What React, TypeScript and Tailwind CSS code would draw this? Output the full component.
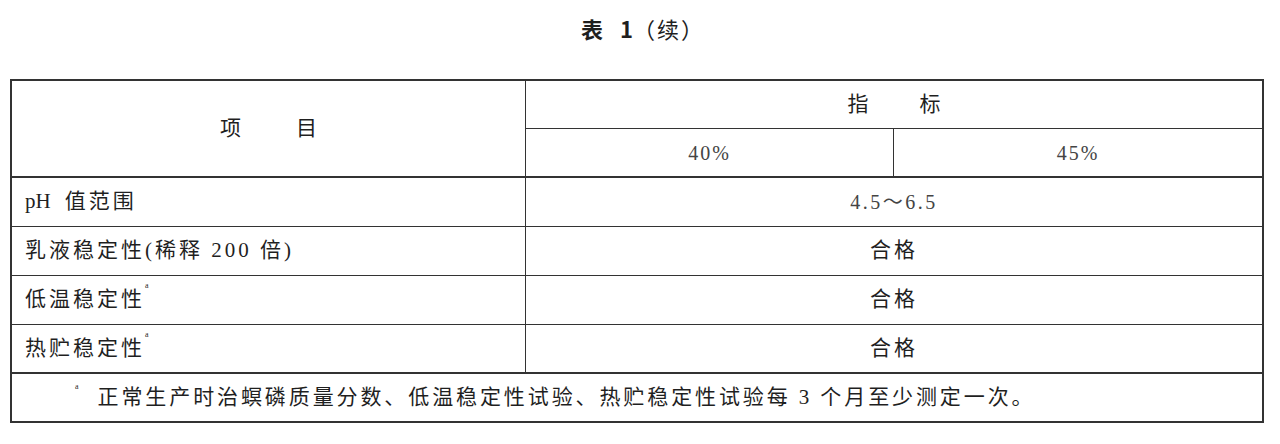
const font = "font-['Liberation_Serif','Noto_Sans_CJK_SC',serif]";

const rows = [
  { label: "pH 值范围", note: false, value: "4.5～6.5" },
  { label: "乳液稳定性(稀释 200 倍)", note: false, value: "合格" },
  { label: "低温稳定性", note: true, value: "合格" },
  { label: "热贮稳定性", note: true, value: "合格" },
];

const App = () => {
  return (
    <div className={`w-[1280px] h-[444px] bg-white text-[#1f1f1f] ${font}`}>
      <div className="h-[79px] pt-[14px] flex justify-center">
        <h1 className="leading-[28px] text-[22px] font-['Noto_Sans_CJK_SC',sans-serif] pl-[6px]">
          <span className="font-bold">表</span>
          <span className="font-bold ml-[17px]">1</span>
          <span className="tracking-[2px]">（续）</span>
        </h1>
      </div>

      <div className="ml-[10px] w-[1254px] h-[344px] border-2 border-[#333] flex flex-col">
        {/* header */}
        <div className="flex h-[97px] border-b-2 border-[#333]">
          <div className="w-[514px] border-r border-[#333] flex items-center justify-center gap-[55px] text-[21px]">
            <span>项</span>
            <span>目</span>
          </div>
          <div className="flex-1 flex flex-col">
            <div className="h-[48px] border-b border-[#333] flex items-center justify-center gap-[51px] text-[21px]">
              <span>指</span>
              <span>标</span>
            </div>
            <div className="flex-1 flex text-[20px] text-[#444]">
              <div className="w-[368px] border-r border-[#333] flex items-center justify-center tracking-[2px]">
                40%
              </div>
              <div className="flex-1 flex items-center justify-center tracking-[2px]">
                45%
              </div>
            </div>
          </div>
        </div>

        {/* body */}
        {rows.map((row, i) => (
          <div
            key={row.label}
            className={`flex h-[49px] ${
              i === rows.length - 1 ? "border-b-2" : "border-b"
            } border-[#333]`}
          >
            <div className="w-[514px] border-r border-[#333] flex items-center pl-[13px] text-[21px] tracking-[3px]">
              {i === 0 ? (
                <>
                  <span className="mr-[14px] tracking-normal">pH</span>
                  <span>值范围</span>
                </>
              ) : (
                <span>{row.label}</span>
              )}
              {row.note && (
                <sup className="text-[8px] self-start mt-[14px] tracking-normal">a</sup>
              )}
            </div>
            {i === 0 ? (
              <div className="flex-1 flex items-center justify-center text-[20px] tracking-[2.5px] text-[#444]">
                {row.value}
              </div>
            ) : (
              <div className="flex-1 flex items-center justify-center text-[21px] tracking-[3px]">
                {row.value}
              </div>
            )}
          </div>
        ))}

        {/* footnote */}
        <div className="flex-1 flex items-center pl-[63px] text-[21px]">
          <sup className="text-[8px] self-start mt-[17px] mr-[19px]">a</sup>
          <span className="tracking-[2.9px]">
            正常生产时治螟磷质量分数、低温稳定性试验、热贮稳定性试验每 3 个月至少测定一次。
          </span>
        </div>
      </div>
    </div>
  );
};

export default App;
